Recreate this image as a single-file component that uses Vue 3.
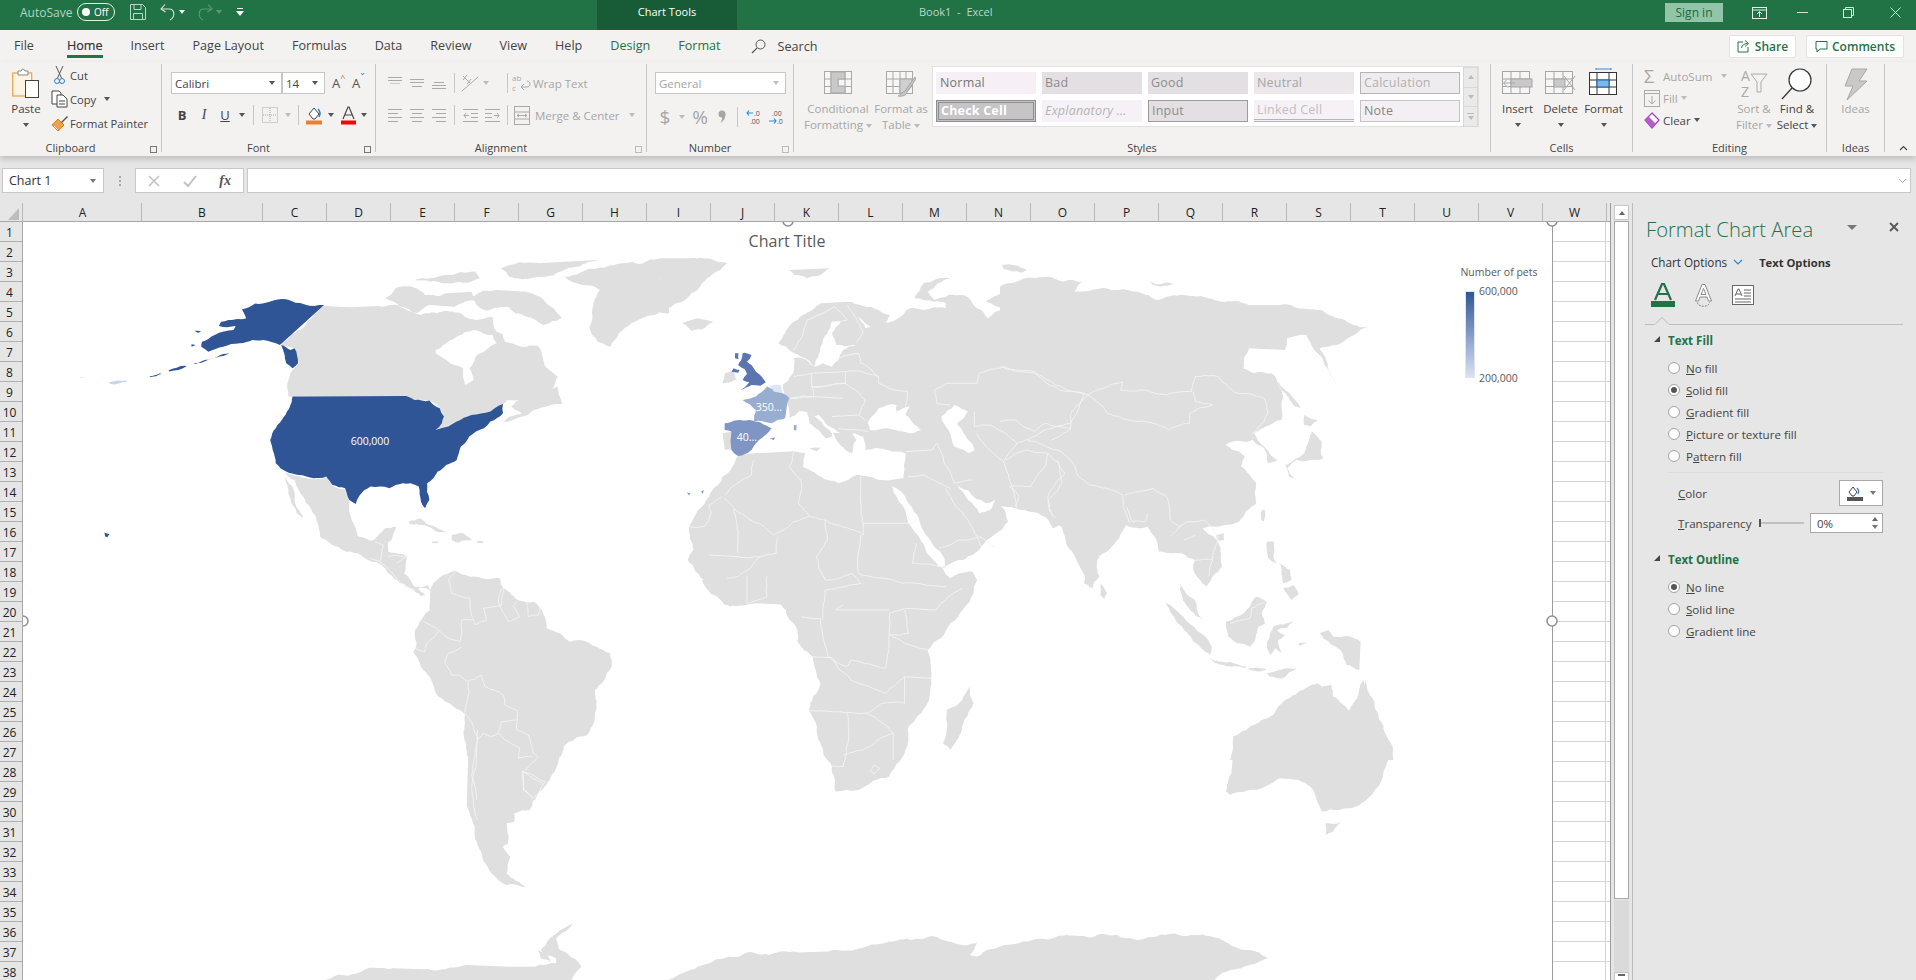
<script setup>
const colNames = 'A B C D E F G H I J K L M N O P Q R S T U V W'.split(' ')
const rows = Array.from({ length: 38 }, (_, i) => i + 1)
const tabs = [
  { t: 'File' }, { t: 'Home', on: true }, { t: 'Insert' }, { t: 'Page Layout' }, { t: 'Formulas' },
  { t: 'Data' }, { t: 'Review' }, { t: 'View' }, { t: 'Help' }, { t: 'Design', g: true }, { t: 'Format', g: true }
]
const styleCells = [
  ['Normal', 's-normal'], ['Bad', 's-bad'], ['Good', 's-good'], ['Neutral', 's-neutral'], ['Calculation', 's-calc'],
  ['Check Cell', 's-check'], ['Explanatory ...', 's-expl'], ['Input', 's-input'], ['Linked Cell', 's-link'], ['Note', 's-note']
]
const fillOpts = [
  { k: 'N', r: 'o fill' }, { k: 'S', r: 'olid fill', on: true }, { k: 'G', r: 'radient fill' },
  { k: 'P', r: 'icture or texture fill' }, { p: 'P', k: 'a', r: 'ttern fill' }
]
const lineOpts = [
  { k: 'N', r: 'o line', on: true }, { k: 'S', r: 'olid line' }, { k: 'G', r: 'radient line' }
]

/* Each frame maps traced coordinates on to the page: [x, y, scaleX, scaleY]. */
const F = {
  a: [0, 200, .4209, .3333],
  e: [660, 220, .4464, .3333],
  o: [1000, 220, .3827, .3333],
  s: [300, 580, .7653, .3333],
  m: [320, 500, .3333, .3333],
  i: [1150, 520, .3333, .3333],
  w: [0, 860, .5102, .3333]
}
const land = [
  // Canada, Arctic, Greenland
  ['a', '770,318 830,322 900,318 960,325 1000,345 1050,335 1100,345 1130,360 1170,350 1180,395 1220,400 1250,410 1275,430 1295,500 1325,530 1310,570 1280,590 1240,600 1205,600 1175,625 1165,635 1120,645 1085,665 1065,680 1035,690 1055,650 1045,625 1020,602 985,600 965,588 715,588 695,590 685,590 682,560 690,520 700,505 710,490 700,445 668,435'],
  ['a', '1195,665 1240,640 1215,620 1240,595 1285,575 1325,560 1330,590 1335,612 1290,622 1240,650'],
  ['a', '915,295 940,265 990,265 1010,285 1060,280 1120,275 1130,300 1080,320 1020,315 990,340 950,320'],
  ['a', '985,240 1060,225 1130,215 1140,235 1060,250'],
  ['a', '1120,290 1180,270 1250,275 1310,320 1335,355 1290,375 1250,350 1205,320 1150,330'],
  ['a', '1190,205 1280,190 1340,185 1420,180 1330,215 1260,235 1210,230'],
  ['a', '1340,230 1420,205 1480,190 1568,175 1590,340 1500,370 1470,400 1450,440 1420,425 1400,380 1410,310 1425,270'],
  ['e', '0,115 60,115 150,130 105,175 90,200 70,220 50,245 0,275'],
  // Mexico + Central America
  ['a', '675,818 710,828 745,838 775,832 790,858 820,868 830,905 835,960 850,1010 880,1025 920,990 940,980 930,1020 905,1040 900,1055 940,1065 965,1075 960,1120 990,1165 1010,1185 1000,1188 950,1150 900,1090 850,1060 800,1040 760,1000 750,950 720,890 700,840'],
  ['a', '675,820 695,860 715,940 720,955 705,940 685,880'],
  ['m', '0,110 60,140 100,158 120,152 150,178 185,195 230,235 265,262 290,278 300,262 325,255 332,275 300,260 280,262 262,248 240,228 232,210 262,170 225,158 205,160 205,120 230,80 195,85 165,120 125,125 100,100 95,60 0,0'],
  ['m', '265,65 300,55 345,80 385,100 350,95 310,75 270,72'],
  ['m', '395,105 430,100 455,120 415,128 395,120'],
  ['m', '335,124 355,124 352,130 337,129'],
  ['m', '470,124 490,124 490,128 472,128'],
  // South America
  ['m', '330,270 360,232 405,212 450,230 500,238 540,235 550,265 600,302 640,305 665,330 680,385 720,400 750,425 800,425 830,440 870,460 875,500 850,545 825,570 825,640 805,700 770,712 725,745 715,790 680,840 650,890 645,900 450,900 445,780 435,645 400,620 355,590 320,520 280,455 290,430 285,390 310,350 330,330'],
  ['s', '218,390 385,330 385,410 375,465 345,490 335,560 320,620 305,660 300,690 280,700 280,725 270,730 272,790 265,800 275,830 270,880 295,922 270,915 250,880 238,830 228,760 218,680 220,500'],
  // Africa
  ['e', '175,708 210,700 290,695 325,700 320,740 360,770 400,790 440,765 490,780 545,775 520,800 545,860 580,950 620,1030 650,1075 700,1055 710,1080 690,1120 660,1180 650,1200 320,1200 300,1155 220,1150 155,1160 135,1110 80,1055 62,1020 75,990 65,920 85,870 115,815 140,770'],
  ['s', '525,0 555,75 600,70 625,55 635,90 650,150 650,185 670,230 680,310 665,390 680,490 695,560 700,635 730,630 770,590 790,520 795,440 820,370 825,290 820,210 850,130 880,40 885,0'],
  ['s', '875,320 880,370 865,450 850,510 840,490 845,390 865,360'],
  // Eurasia west + centre (the east is traced separately below)
  ['e', '275,495 295,465 300,450 300,415 320,415 345,440 295,395 265,370 280,340 320,285 360,250 420,245 490,270 515,285 505,310 475,325 445,290 460,325 520,305 560,265 590,270 640,265 640,250 590,240 570,235 590,190 650,175 600,215 615,240 680,225 710,265 735,295 770,265 730,245 770,215 830,180 860,170 930,190 925,215 1000,205 1090,225 1100,800 1050,900 985,1000 970,1105 950,1090 910,905 880,925 870,900 800,865 745,850 750,835 780,905 720,980 635,1045 600,960 530,810 520,795 545,775 550,700 460,690 455,650 430,640 440,660 430,700 415,690 385,630 350,590 335,580 310,575 290,595 285,540'],
  ['e', '330,575 350,590 385,640 385,650 370,655 335,610'],
  ['e', '335,685 360,682 350,695'],
  ['e', '300,618 308,620 305,632 300,630'],
  ['e', '145,460 165,455 170,480 140,490'],
  ['e', '140,640 160,635 160,690 145,690'],
  ['e', '50,310 85,295 120,305 100,325 70,332'],
  ['e', '290,150 380,145 330,175 300,165'],
  // East Asia
  ['o', '0,200 20,190 120,170 215,185 195,215 310,210 410,240 470,225 580,245 650,255 730,255 760,255 840,270 965,320 925,345 880,375 835,385 880,495 840,410 810,365 800,345 750,355 745,390 650,385 635,445 665,460 710,460 740,530 735,600 695,620 665,640 690,680 725,720 700,730 690,685 660,660 610,665 590,675 625,695 640,710 630,740 670,790 670,850 625,905 560,920 530,925 570,965 580,1040 540,1100 505,1050 510,1020 475,1000 450,1000 415,995 385,920 330,915 285,990 255,1010 260,1070 235,1105 200,1020 170,950 160,920 130,895 105,865 40,865 0,850'],
  ['o', '815,635 840,665 845,715 810,720 775,720 750,745 770,775 755,770 745,735 795,700 805,670'],
  ['o', '795,585 830,600 810,620 795,615'],
  ['o', '715,465 760,525 785,565 770,560 735,510'],
  ['o', '685,870 692,870 690,905 682,900'],
  ['o', '565,945 585,940 585,960 570,962'],
  ['o', '262,1090 280,1120 272,1138 262,1125'],
  ['o', '5,135 70,150 55,158 10,148'],
  ['o', '390,185 455,190 440,197 400,195'],
  // South-East Asia
  ['i', '90,190 105,215 135,240 160,300 120,270 90,210'],
  ['i', '48,248 100,290 160,345 185,380 180,405 130,365 90,315'],
  ['i', '180,415 240,425 290,440 285,445 220,435 190,425'],
  ['i', '228,305 260,290 300,260 320,230 350,245 335,280 345,310 325,320 300,380 260,370 235,350'],
  ['i', '370,320 430,305 410,325 380,330 405,345 385,360 395,400 375,385 360,405 350,370 360,340'],
  ['i', '510,340 535,330 550,350 590,348 632,365 628,450 590,435 575,395 545,375 520,355'],
  ['i', '350,65 372,65 370,110 380,130 355,115 350,90'],
  ['i', '400,205 430,195 445,225 425,240 410,220'],
  ['i', '385,125 420,150 425,180 400,190 395,150'],
  ['i', '350,460 440,445 400,475 360,470'],
  ['i', '445,370 470,368 448,378'],
  ['i', '295,445 350,447 345,450 298,450'],
  // Australia
  ['i', '240,720 250,650 300,620 370,585 385,560 430,525 470,540 485,500 545,495 550,535 600,575 620,550 640,480 655,545 680,590 710,650 730,690 730,720'],
  ['s', '1210,635 1218,560 1220,470 1270,420 1300,345 1330,310 1350,350 1370,395 1392,300 1410,420 1428,510 1415,590 1380,680 1335,695 1330,670 1320,620 1305,600 1280,595 1250,630 1215,645'],
  ['s', '1340,730 1360,725 1350,755 1340,765'],
  // Antarctica
  ['w', '630,360 700,340 770,325 830,328 900,320 915,315 1000,320 1050,320 1090,310 1090,295 1060,270 1075,240 1110,200 1125,190 1090,235 1095,265 1130,300 1140,320 1125,345 1120,360'],
  ['w', '1055,270 1070,280 1080,305 1060,295'],
  ['w', '1310,360 1370,320 1420,295 1490,290 1568,280 1568,360'],
  ['s', '485,1200 520,1160 560,1130 620,1120 690,1115 740,1100 770,1085 800,1080 825,1068 840,1080 885,1090 875,1125 885,1130 920,1095 960,1078 1020,1068 1080,1075 1170,1065 1205,1080 1240,1110 1265,1135 1230,1165 1195,1200']
]
const water = [
  ['a', '1035,450 1080,415 1130,390 1170,405 1180,430 1130,470 1115,505 1125,540 1105,555 1100,505 1060,480 1035,460'],
  ['a', '1190,380 1250,400 1290,430 1240,440 1200,425'],
  ['e', '355,410 360,380 375,340 385,305 405,305 385,340 395,375 440,375 410,390 400,420 385,440 365,430 345,440'],
  ['e', '465,610 490,565 530,555 530,575 560,560 550,585 585,630 560,640 510,625 470,630'],
  ['e', '630,590 660,555 690,575 665,610 680,640 705,690 690,700 660,680 650,640'],
  ['e', '665,795 690,810 730,850 750,840 740,870 715,880 690,840'],
  ['e', '522,800 540,815 605,960 640,1040 625,1040 580,950 545,860'],
  ['e', '345,590 355,585 405,640 385,640']
]
const borders = [
  // South America
  ['m', '405,215 385,240 395,280 450,295 455,345 465,375 500,360 490,325 545,315 550,265'],
  ['m', '545,265 535,300 555,345 565,365 600,350 580,320 590,305'],
  ['m', '620,310 625,350 655,345 660,325'],
  ['m', '310,365 350,385 385,415 420,425 425,360 460,360'],
  ['m', '285,445 315,455 320,430 355,395'],
  ['m', '425,440 385,460 375,490 395,525 415,525 440,545 485,525 495,560 550,585 555,615 590,630 590,690 625,705 640,760 655,770 610,815 612,870 640,895'],
  ['m', '535,700 545,665 590,660'],
  ['m', '535,700 600,745 595,775 640,770'],
  ['m', '435,640 475,715 490,700 515,710 535,700'],
  ['m', '445,545 440,610 435,640'],
  ['m', '475,715 465,770 455,830 470,900'],
  ['m', '610,815 670,855'],
  ['m', '150,175 200,200 225,230 255,262 285,270'],
  ['m', '165,125 190,135 180,185'],
  ['m', '205,170 260,170 230,190'],
  ['s', '232,450 230,560 225,640 232,720'],
  ['s', '290,575 320,605 305,655 292,630 290,575'],
  // Africa
  ['e', '140,830 110,855 115,880 100,920 65,920'],
  ['e', '165,868 175,1000'],
  ['e', '145,835 255,945 300,905 335,888 370,900 455,945 455,910 450,770'],
  ['e', '210,720 205,765 145,825'],
  ['e', '335,888 310,850 315,780 290,740 300,695'],
  ['e', '455,910 565,910 575,900'],
  ['e', '370,900 375,960 350,1010 370,1080 430,1060 450,1090 370,1110 365,1200'],
  ['e', '450,945 445,1060 545,1090 640,1100'],
  ['e', '265,950 260,1000 225,1010 175,1070 150,1075'],
  ['e', '110,1005 175,1010 225,1010'],
  ['e', '575,970 565,1030 635,1040'],
  ['e', '195,1070 195,1150 240,1130 240,1070'],
  ['s', '655,110 680,115 685,185 690,230 715,260 720,240 765,265 770,160 770,100 790,85 830,90 865,25'],
  ['s', '710,75 700,90 770,90'],
  ['s', '790,90 795,160 770,165 820,210'],
  ['s', '670,230 695,232 720,300 765,340 790,290 825,295'],
  ['s', '790,290 790,370 760,370 740,400 665,390'],
  ['s', '715,400 710,560 695,558'],
  ['s', '740,400 775,460 735,510 710,525'],
  ['s', '775,460 775,540'],
  ['s', '750,555 758,565 750,582 745,572 750,555'],
  // Europe + central Asia
  ['e', '300,390 320,345 330,300 390,260'],
  ['e', '390,260 420,300 400,305'],
  ['e', '420,255 455,335 440,370'],
  ['e', '395,420 445,400 450,430 490,470'],
  ['e', '340,460 415,455 415,490 340,500'],
  ['e', '300,470 340,460 340,500 345,530 290,535'],
  ['e', '415,455 490,470 490,490 555,515 550,560'],
  ['e', '340,500 415,490 460,540 445,585'],
  ['e', '290,535 345,530 410,535'],
  ['e', '385,590 445,585 460,600'],
  ['e', '400,625 465,635'],
  ['e', '615,510 640,490 710,490 715,460 770,440 840,460 895,510 950,520'],
  ['e', '615,510 620,550 650,555'],
  ['e', '705,575 705,620 740,615 800,670 850,640 920,610 950,520'],
  ['e', '620,670 660,790 700,780'],
  ['e', '550,695 610,690 620,670'],
  ['e', '555,770 590,765 650,805'],
  ['e', '770,725 790,800 800,865'],
  ['e', '800,670 770,725 730,680 710,640'],
  ['e', '640,805 690,900 720,980'],
  ['e', '625,985 670,960 715,950 750,980'],
  ['e', '890,720 900,790 870,840 880,890'],
  // East Asia
  ['o', '0,440 40,450 90,455 145,495 215,520 230,525 270,505 320,485 315,510 370,510 435,525 500,515 510,470 570,470 620,520 690,535 700,580 690,605 660,640'],
  ['o', '230,525 185,580 185,625 120,610 90,635 40,600 0,605'],
  ['o', '230,525 270,560 280,580 335,600 440,630 495,610 495,580 555,555 510,545 505,515'],
  ['o', '135,660 185,625'],
  ['o', '70,660 150,690 185,720 205,770 235,795 320,825 340,910'],
  ['o', '125,700 170,760 125,830 130,875 145,895'],
  ['o', '40,860 50,830 25,800 80,800 120,735 125,700'],
  ['o', '15,720 40,700 70,690 125,700'],
  ['o', '325,825 400,805 435,830 445,900 470,920'],
  ['o', '445,950 470,920 490,905 530,900 570,950 555,1020 545,1070'],
  ['o', '480,960 510,945'],
  ['o', '510,1020 555,1020'],
  ['o', '660,640 690,625'],
  ['o', '330,860 345,905 380,905 385,880'],
  ['i', '240,310 300,295 305,265 345,245']
]
const blues = [
  ['uk', 'e', '185,400 190,398 205,405 195,425 205,435 215,455 228,470 237,487 225,497 205,495 180,510 200,487 185,480 195,462 190,448 175,435 182,420'],
  ['uk', 'e', '165,445 178,450 175,458 160,455'],
  ['uk', 'e', '168,400 176,400 176,418 168,415'],
  ['fr', 'e', '185,540 215,530 240,500 275,520 290,535 280,595 250,610 210,605 215,570'],
  ['fr', 'e', '300,615 306,615 305,632 300,630'],
  ['be', 'e', '245,497 270,495 275,520 255,515'],
  ['es', 'e', '145,610 200,600 250,625 215,670 205,690 175,708 160,690 160,635 145,630'],
  ['es', 'e', '245,655 258,652 255,660'],
  ['es', 'e', '60,818 68,820 65,826'],
  ['es', 'e', '92,815 98,810 96,822'],
  ['us', 'a', '695,590 965,588 985,600 1020,602 1045,625 1055,650 1050,670 1035,690 1065,680 1085,665 1120,645 1165,635 1175,625 1195,612 1195,640 1165,665 1150,685 1115,710 1095,740 1085,780 1060,795 1040,815 1015,850 1020,900 1010,925 1000,905 995,860 975,850 940,855 925,865 880,860 855,885 845,912 830,900 820,865 790,855 775,830 745,835 710,825 680,815 655,790 648,750 642,720 655,685 675,650'],
  ['us', 'a', '770,315 680,298 640,305 575,328 585,355 560,358 525,365 520,378 560,378 555,390 510,405 480,425 478,440 495,455 530,440 570,430 600,420 625,420 665,435'],
  ['us', 'a', '668,435 690,450 700,445 708,490 695,505 680,490 675,460'],
  ['us', 'a', '460,490 530,462 545,460 530,468 465,492'],
  ['us', 'a', '400,512 440,497 443,499 403,515'],
  ['us', 'a', '355,530 380,520 383,522 358,532'],
  ['us', 'a', '248,998 260,1002 255,1012 250,1010'],
  ['us', 'a', '455,433 465,435 455,440'],
  ['us', 'a', '462,392 478,395 470,398'],
  ['pale', 'a', '190,532 196,532 194,536'],
  ['pale', 'a', '258,548 300,542 302,546 262,552']
]

/* Traced outlines are coarse: a seeded midpoint displacement gives them a coastline's grain. */
let seed = 12345
const rnd = () => (seed = (seed * 16807) % 2147483647) / 2147483647 - 0.5
const split = (a, b, amp, out) => {
  const dx = b[0] - a[0]
  const dy = b[1] - a[1]
  if (Math.hypot(dx, dy) < 5) return
  const k = rnd() * amp
  const m = [(a[0] + b[0]) / 2 - dy * k, (a[1] + b[1]) / 2 + dx * k]
  split(a, m, amp, out)
  out.push(m)
  split(m, b, amp, out)
}
const outline = (f, s, amp, closed, keep) => {
  const [tx, ty, sx, sy] = F[f]
  const p = s.split(' ').map((q) => {
    const [x, y] = q.split(',').map(Number)
    return [tx + x * sx, ty + y * sy]
  })
  const out = []
  const n = p.length
  for (let i = 0; i < n; i++) {
    out.push(p[i])
    if (!closed && i === n - 1) break
    const a = p[i]
    const b = p[(i + 1) % n]
    const dx = Math.abs(b[0] - a[0])
    const dy = Math.abs(b[1] - a[1])
    const len = Math.hypot(dx, dy)
    const straight = len > keep || ((dx < 2 || dy < 2) && len > 25)
    if (!straight) split(a, b, amp, out)
  }
  return 'M' + out.map((q) => q[0].toFixed(1) + ',' + q[1].toFixed(1)).join(' ') + (closed ? 'Z' : '')
}
const shapes = [
  ...land.map(([f, p]) => ({ c: 'land', d: outline(f, p, .2, true, 1e4) })),
  ...water.map(([f, p]) => ({ c: 'water', d: outline(f, p, .2, true, 1e4) })),
  ...borders.map(([f, p]) => ({ c: 'bd', d: outline(f, p, .14, false, 1e4) })),
  ...blues.map(([c, f, p]) => ({ c, d: outline(f, p, .16, true, 50) }))
]
</script>

<template>
  <div class="app">
    <header class="titlebar">
      <div class="tb-left">
        <span class="autosave">AutoSave</span>
        <span class="toggle"><i></i><b>Off</b></span>
        <svg class="qs" width="18" height="18" viewBox="0 0 18 18" fill="none" stroke="#bcd6c7"><path d="M1.5 1.5h12l3 3v12h-15z"/><path d="M5 1.5v5h7v-5M4.5 16.5v-6h9v6"/></svg>
        <svg class="qs2" width="16" height="18" viewBox="0 0 16 18" fill="none" stroke="#d5e6dc" stroke-width="1.1"><path d="M5 1.5 1 6l4.5 3"/><path d="M1.5 6H9c6 0 6.500 8 1 11"/></svg>
        <span class="cr cr-w"></span>
        <svg class="qs3" width="16" height="18" viewBox="0 0 16 18" fill="none" stroke="#5d9a7b" stroke-width="1.1"><path d="M11 1.500 15 6l-4.500 3"/><path d="M14.500 6H7c-6 0-6.500 8-1 11"/></svg>
        <span class="cr cr-d"></span>
        <svg class="qs4" width="8" height="10" viewBox="0 0 8 10" fill="#fff"><rect x="1" y="1" width="6" height="1"/><path d="M0 4h8L4 9z"/></svg>
      </div>
      <div class="ctab">Chart Tools</div>
      <div class="doc">Book1&nbsp; -&nbsp; Excel</div>
      <div class="tb-right">
        <span class="signin">Sign in</span>
        <svg class="wi1" width="15" height="12" viewBox="0 0 15 12" fill="none" stroke="#e4f0e9"><rect x=".5" y=".5" width="14" height="11"/><path d="M.5 3h14M7.500 10V5M5 7l2.500-2.500L10 7"/></svg>
        <svg class="wi2" width="11" height="2" viewBox="0 0 11 2"><rect width="11" height="1" fill="#cfe3d7"/></svg>
        <svg class="wi3" width="11" height="11" viewBox="0 0 11 11" fill="none" stroke="#d9e9e0"><path d="M2.500 2.500v-2h8v8h-2"/><rect x=".5" y="2.500" width="8" height="8"/></svg>
        <svg class="wi4" width="11" height="11" viewBox="0 0 11 11" stroke="#cfe3d7"><path d="M.5.5l10 10M10.500.5l-10 10"/></svg>
      </div>
    </header>

    <nav class="tabs">
      <span v-for="x in tabs" :key="x.t" class="tab" :class="{ on: x.on, grn: x.g }">{{ x.t }}</span>
      <span class="search">
        <svg width="15" height="15" viewBox="0 0 15 15" fill="none" stroke="#555"><circle cx="9.500" cy="5.500" r="4.500"/><path d="M6.200 8.800 1 14" stroke-width="1.200"/></svg>
        <span>Search</span>
      </span>
      <span class="tabs-right">
        <span class="cbtn cshare">
          <svg width="14" height="14" viewBox="0 0 14 14" fill="none" stroke="#217346"><path d="M6 3H1v10h10V8"/><path d="M4.500 9c.5-3 3-4.500 6-4.500M8 1.500l3.500 3-3.500 3"/></svg>
          <span>Share</span>
        </span>
        <span class="cbtn ccomm">
          <svg width="13" height="13" viewBox="0 0 13 13" fill="none" stroke="#217346"><path d="M1 1.500h11v7.500H5l-3 3V9H1z"/></svg>
          <span>Comments</span>
        </span>
      </span>
    </nav>

    <section class="ribbon">
      <!-- Clipboard -->
      <div class="grp g-clip">
        <div class="gbody">
          <div class="lbtn paste">
            <svg width="28" height="33" viewBox="0 0 28 33" fill="none"><rect x=".7" y="5" width="19" height="23" fill="#fdf3e3" stroke="#eca24c" stroke-width="1.200"/><path d="M6 5V3h3l1.500-2h1L13 3h3v4H6z" fill="#fff" stroke="#8a8a8a"/><rect x="13.500" y="12.500" width="13" height="17" fill="#fff" stroke="#444"/></svg>
            <span>Paste</span>
            <i class="caret dk cm"></i>
          </div>
          <div class="scol">
            <div class="srow"><span class="sic"><svg width="11" height="20" viewBox="0 0 11 20" fill="none" stroke="#555"><path d="M2 1 7.500 13M9 1 3.500 13"/><circle cx="3" cy="16" r="2.500" stroke="#2a7fc9"/><circle cx="8" cy="16" r="2.500" stroke="#2a7fc9"/></svg></span>Cut</div>
            <div class="srow"><span class="sic"><svg width="18" height="18" viewBox="0 0 18 18" fill="#fff" stroke="#444"><path d="M1 1h7l2 2v11H1z"/><path d="M6 5h6l4 4v8H6z"/><path d="M8 11h6M8 14h6"/></svg></span>Copy<i class="caret dk copyc"></i></div>
            <div class="srow"><span class="sic"><svg width="18" height="18" viewBox="0 0 18 18"><path d="M1 11 7 5l6 6-6 6z" fill="#f0a04b" stroke="#d9801f"/><path d="M10 8l6-6 1 1-6 6z" fill="#555"/><path d="M3 12l4 4" stroke="#fff"/></svg></span>Format Painter</div>
          </div>
        </div>
        <div class="glabel shift">Clipboard<i class="launch"></i></div>
      </div>

      <!-- Font -->
      <div class="grp g-font">
        <div class="gbody col">
          <div class="f1">
            <span class="combo">Calibri<i class="caret dk"></i></span>
            <span class="combo">14<i class="caret dk"></i></span>
            <span class="aup">A<sup>^</sup></span>
            <span class="aup">A<sup class="bl">ˇ</sup></span>
          </div>
          <div class="f2">
            <b class="fb">B</b><i class="fi">I</i><u class="fu">U</u><i class="caret dk"></i><i class="vsep"></i>
            <svg width="16" height="16" viewBox="0 0 16 16" fill="none" stroke="#aaa" stroke-dasharray="1 1"><rect x=".5" y=".5" width="15" height="15"/><path d="M8 1v14M1 8h14"/></svg>
            <i class="caret lt"></i><i class="vsep"></i>
            <svg width="17" height="19" viewBox="0 0 17 19"><path d="M3 8 8 2l5 6-4 5H7z" fill="#fff" stroke="#444"/><path d="M12 3c3 3 2 6 1 8" stroke="#2a7fc9" fill="none" stroke-width="1.500"/><rect y="14.500" width="16" height="4" fill="#ed7d31"/></svg>
            <i class="caret dk"></i>
            <svg width="17" height="19" viewBox="0 0 17 19"><rect x="1" y="14.500" width="15" height="4" fill="#f00"/><path d="M3 13 8 1h1l5 12M5 9h7" fill="none" stroke="#444" stroke-width="1.200"/></svg>
            <i class="caret dk"></i>
          </div>
        </div>
        <div class="glabel shift">Font<i class="launch"></i></div>
      </div>

      <!-- Alignment -->
      <div class="grp g-align">
        <div class="gbody col">
          <div class="a1">
            <svg width="14" height="14" viewBox="0 0 14 14" stroke="#aaa"><path d="M0 1.500h14M0 4.500h14"/><path d="M2 7.500h10" stroke="#ccc"/></svg>
            <svg width="14" height="14" viewBox="0 0 14 14" stroke="#aaa"><path d="M0 3.500h14M0 6.500h14M2 10.500h10"/></svg>
            <svg width="14" height="14" viewBox="0 0 14 14" stroke="#aaa"><path d="M2 6.500h10M0 9.500h14M0 12.500h14"/></svg>
            <i class="vsep"></i>
            <svg width="18" height="18" viewBox="0 0 18 18" fill="none" stroke="#aaa"><path d="M1 17 17 3M2 2l8 8M6 1 2 6M10 5 6 10"/></svg>
            <i class="caret lt"></i><span></span><i class="vsep"></i>
            <svg width="20" height="20" viewBox="0 0 20 20" fill="none" stroke="#aaa"><text x="0" y="8" class="wt">ab</text><text x="0" y="18" class="wt">c</text><path d="M9 14h6c4 0 4-6 0-6M12 11l-3 3 3 3"/></svg>
            <span class="dis wrap">Wrap Text</span>
          </div>
          <div class="a2">
            <svg width="14" height="14" viewBox="0 0 14 14" stroke="#aaa"><path d="M0 1.500h14M0 5.500h10M0 9.500h14M0 13.500h10"/></svg>
            <svg width="14" height="14" viewBox="0 0 14 14" stroke="#aaa"><path d="M0 1.500h14M2 5.500h10M0 9.500h14M2 13.500h10"/></svg>
            <svg width="14" height="14" viewBox="0 0 14 14" stroke="#aaa"><path d="M0 1.500h14M4 5.500h10M0 9.500h14M4 13.500h10"/></svg>
            <i class="vsep"></i>
            <svg width="15" height="14" viewBox="0 0 15 14" fill="none" stroke="#aaa"><path d="M0 1.500h15M8 5.500h7M8 9.500h7M0 13.500h15M6 7.500H1M3 5 1 7.500 3 10" /></svg>
            <svg width="15" height="14" viewBox="0 0 15 14" fill="none" stroke="#aaa"><path d="M0 1.500h15M0 5.500h7M0 9.500h7M0 13.500h15M9 7.500h5M12 5l2 2.500L12 10"/></svg>
            <i class="vsep"></i>
            <svg width="16" height="19" viewBox="0 0 16 19" fill="none" stroke="#aaa"><rect x=".5" y=".5" width="15" height="18"/><path d="M.5 6h15M.5 13h15M3 9.500h10M5 8 3 9.500 5 11M11 8l2 1.500L11 11"/></svg>
            <span class="dis merge">Merge &amp; Center<i class="caret lt"></i></span>
          </div>
        </div>
        <div class="glabel shift">Alignment<i class="launch lite"></i></div>
      </div>

      <!-- Number -->
      <div class="grp g-num">
        <div class="gbody col">
          <div class="n1"><span class="combo dis">General<i class="caret lt"></i></span></div>
          <div class="n2">
            <span class="dis dollar">$</span><i class="caret lt"></i>
            <span class="dis pct">%</span>
            <svg width="8" height="14" viewBox="0 0 8 14"><circle cx="4" cy="4" r="3.500" fill="#a6a6a6"/><path d="M7.500 4c0 4-1.500 7-5 9 1-2 2-4 1.500-6z" fill="#a6a6a6"/></svg>
            <i class="vsep"></i>
            <svg width="16" height="18" viewBox="0 0 16 18"><path d="M7 5H1M3 2.500 1 5l2 2.500" fill="none" stroke="#2a8fdc" stroke-width="1.200"/><text x="8" y="8" class="mini">.0</text><text x="4" y="16" class="mini">.00</text></svg>
            <svg width="16" height="18" viewBox="0 0 16 18"><text x="4" y="8" class="mini">.00</text><path d="M1 13h7M6 10.500 8 13l-2 2.500" fill="none" stroke="#2a8fdc" stroke-width="1.200"/><text x="9" y="16" class="mini">.0</text></svg>
          </div>
        </div>
        <div class="glabel shift">Number<i class="launch lite"></i></div>
      </div>

      <!-- Styles -->
      <div class="grp g-styles">
        <div class="gbody">
          <div class="lbtn w-cf dis">
            <svg width="28" height="33" viewBox="0 0 28 33" fill="none" stroke="#a8a8a8"><rect x=".5" y="3.500" width="27" height="22" fill="#f6f6f6"/><path d="M.5 11h27M.5 18.500h27M7 3.500v22M14 3.500v22M21 3.500v22"/><path d="M7 4h14v7h-7v7h7v7H7z" fill="#c9c9c9"/></svg>
            <span>Conditional</span>
            <span>Formatting<i class="caret lt in"></i></span>
          </div>
          <div class="lbtn w-ft dis">
            <svg width="30" height="33" viewBox="0 0 30 33" fill="none" stroke="#a8a8a8"><rect x=".5" y="3.500" width="26" height="22" fill="#f6f6f6"/><path d="M.5 11h26M.5 18.500h26M7 3.500v22M14 3.500v22M20 3.500v22"/><path d="M14 11h12v7l-6 7h-6z" fill="#d0d0d0"/><path d="M29 9 19 23c-3 1-4 4-7 5 4 1 9-1 9-4L30 11z" fill="#c5c5c5"/></svg>
            <span>Format as</span>
            <span>Table<i class="caret lt in"></i></span>
          </div>
          <div class="gallery">
            <div class="gcells">
              <span v-for="s in styleCells" :key="s[0]" class="sc" :class="s[1]">{{ s[0] }}</span>
            </div>
            <div class="gscroll">
              <span><i class="cu"></i></span>
              <span><i class="caret lt"></i></span>
              <span class="gs3"><i class="bar"></i><i class="caret lt"></i></span>
            </div>
          </div>
        </div>
        <div class="glabel">Styles</div>
      </div>

      <!-- Cells -->
      <div class="grp g-cells">
        <div class="gbody">
          <div class="lbtn w-c">
            <svg width="31" height="33" viewBox="0 0 31 33" fill="none" stroke="#a5a5a5"><rect x=".5" y="3.500" width="27" height="22" fill="#f6f6f6"/><path d="M.5 11h27M.5 18.500h27M9 3.500v22M18 3.500v22"/><rect x="9" y="11" width="21" height="8" fill="#c9c9c9"/><path d="M13 15H2M6 10.500 1.500 15 6 19.500" stroke="#a5a5a5" fill="#f6f6f6"/></svg>
            <span>Insert</span><i class="caret dk cm"></i>
          </div>
          <div class="lbtn w-c">
            <svg width="31" height="33" viewBox="0 0 31 33" fill="none" stroke="#a5a5a5"><rect x=".5" y="3.500" width="27" height="22" fill="#f6f6f6"/><path d="M.5 11h27M.5 18.500h27M9 3.500v22M18 3.500v22"/><rect x="9" y="11" width="11" height="8" fill="#c9c9c9"/><path d="M19 8l11 14M30 8 19 22"/></svg>
            <span>Delete</span><i class="caret dk cm"></i>
          </div>
          <div class="lbtn w-c">
            <svg width="29" height="33" viewBox="0 0 29 33" fill="none" stroke="#333"><path d="M7 1h15M7 0v2M22 0v2" stroke="#2a8fdc"/><rect x=".5" y="4.500" width="27" height="22" fill="#fff"/><path d="M.5 12h27M.5 19h27M8 4.500v22M20 4.500v22"/><rect x="8" y="12" width="12" height="7" fill="#7ab8ea" stroke="#1f5fa8"/></svg>
            <span>Format</span><i class="caret dk cm"></i>
          </div>
        </div>
        <div class="glabel">Cells</div>
      </div>

      <!-- Editing -->
      <div class="grp g-edit">
        <div class="gbody">
          <div class="scol e-col">
            <div class="erow dis"><span class="sigma">Σ</span>AutoSum<i class="caret lt sumc"></i></div>
            <div class="erow dis"><svg class="eic" width="16" height="17" viewBox="0 0 16 17" fill="none" stroke="#aaa"><rect x=".5" y=".5" width="15" height="16"/><path d="M.5 3.500h15M8 6v8M4.500 10.500 8 14l3.500-3.500" /></svg>Fill<i class="caret lt ml3"></i></div>
            <div class="erow dark"><svg class="eic" width="16" height="17" viewBox="0 0 16 17"><path d="M8 1l7 7-7 8-7-8z" fill="#fff" stroke="#9b3fb4" stroke-width="1.200"/><path d="M1 8h0l3.500-3.500 7 7L8 16z" fill="#b65ccf"/></svg>Clear<i class="caret dk ml3"></i></div>
          </div>
          <div class="lbtn w-sort dis">
            <svg width="30" height="33" viewBox="0 0 30 33" fill="none" stroke="#aaa"><text x="2" y="13" class="az">A</text><text x="2" y="29" class="az">Z</text><path d="M12 6h16l-6 8v10h-4V14z" fill="#f3f2f1"/></svg>
            <span>Sort &amp;</span>
            <span>Filter<i class="caret lt in"></i></span>
          </div>
          <div class="lbtn w-find">
            <svg width="32" height="33" viewBox="0 0 32 33" fill="none" stroke="#333" stroke-width="1.200"><circle cx="19" cy="12" r="11" fill="#fff"/><path d="M11 20 1 31"/></svg>
            <span>Find &amp;</span>
            <span>Select<i class="caret dk in"></i></span>
          </div>
        </div>
        <div class="glabel">Editing</div>
      </div>

      <!-- Ideas -->
      <div class="grp g-ideas">
        <div class="gbody">
          <div class="lbtn w-id dis">
            <svg width="24" height="33" viewBox="0 0 24 33"><path d="M8 1h15l-8 12h8L3 32l6-14H1z" fill="#c9c9c9" stroke="#a8a8a8"/></svg>
            <span>Ideas</span>
          </div>
        </div>
        <div class="glabel">Ideas</div>
      </div>
      <svg class="collapse" width="9" height="6" viewBox="0 0 9 6" fill="none" stroke="#444" stroke-width="1.200"><path d="M1 5l3.500-3.500L8 5"/></svg>
    </section>

    <div class="fbar">
      <div class="namebox">Chart 1<i class="caret md"></i></div>
      <div class="dots"><i></i><i></i><i></i></div>
      <div class="fxbox">
        <svg width="12" height="12" viewBox="0 0 12 12" stroke="#c2c2c2" stroke-width="1.500"><path d="M1 1l10 10M11 1 1 11"/></svg>
        <svg width="14" height="12" viewBox="0 0 14 12" fill="none" stroke="#c2c2c2" stroke-width="2"><path d="M1 7l4 4 8-10"/></svg>
        <span class="fx">fx</span>
      </div>
      <div class="finput"><svg width="9" height="6" viewBox="0 0 9 6" fill="none" stroke="#b5b5b5"><path d="M1 1l3.500 3.500L8 1"/></svg></div>
    </div>

    <main class="main">
      <div class="sheet">
        <div class="colhead">
          <div class="corner"><i></i></div>
          <div v-for="c in colNames" :key="c" class="ch">{{ c }}</div>
        </div>
        <div class="sbody">
          <div class="rowhead">
            <div v-for="r in rows" :key="r" class="rh">{{ r }}</div>
          </div>
          <div class="cells">
            <div class="chart">
              <svg class="map" width="1540" height="758" viewBox="23 222 1540 758">
                <path v-for="(s, i) in shapes" :key="i" :class="s.c" :d="s.d" />
                <defs>
                  <linearGradient id="lg" x1="0" y1="0" x2="0" y2="1">
                    <stop offset="0" stop-color="#2f5597" />
                    <stop offset="1" stop-color="#d9e3f4" />
                  </linearGradient>
                </defs>
                <text x="787" y="247" text-anchor="middle" class="ct">Chart Title</text>
                <text x="1499" y="276" text-anchor="middle" class="lg">Number of pets</text>
                <rect x="1465.500" y="291.500" width="9" height="86" fill="url(#lg)" stroke="#dde6f5" />
                <text x="1479" y="295" class="lg">600,000</text>
                <text x="1479" y="382" class="lg">200,000</text>
                <text x="370" y="445" text-anchor="middle" class="dl">600,000</text>
                <text x="769" y="411" text-anchor="middle" class="dl">350...</text>
                <text x="747" y="441" text-anchor="middle" class="dl">40...</text>
                <circle cx="788" cy="221" r="5" class="hd" />
                <circle cx="1552" cy="221" r="5" class="hd" />
                <circle cx="1552" cy="621" r="5" class="hd" />
                <circle cx="23" cy="621" r="5" class="hd" />
              </svg>
            </div>
          </div>
        </div>
      </div>

      <div class="vscroll">
        <span class="sb-btn"><i class="cu dk2"></i></span>
        <span class="thumb"></span>
        <span class="sb-btn end"><i class="bar2"></i></span>
      </div>

      <aside class="pane">
        <div class="p-head">
          <span class="p-title">Format Chart Area</span>
          <i class="caret p-c"></i>
          <svg class="p-x" width="10" height="10" viewBox="0 0 10 10" stroke="#555" stroke-width="1.800"><path d="M1 1l8 8M9 1 1 9"/></svg>
        </div>
        <div class="p-opts">
          <span>Chart Options</span>
          <svg width="10" height="6" viewBox="0 0 10 6" fill="none" stroke="#2b88d8" stroke-width="1.200"><path d="M1 1l4 4 4-4"/></svg>
          <b>Text Options</b>
        </div>
        <div class="p-icons">
          <svg width="24" height="24" viewBox="0 0 24 24"><path d="M4 17 11 1h2l7 16M7 11h10" fill="none" stroke="#217346" stroke-width="2.200"/><rect y="18" width="24" height="6" fill="#217346"/></svg>
          <svg width="17" height="23" viewBox="0 0 17 23" fill="#fff" stroke="#8a8a8a"><path d="M7 .5h3L16.500 17h-3L12 13H5l-1.500 4h-3z"/><path d="M6 10.500l2.500-6 2.500 6z"/><path d="M2.500 18.500c0 5 12 5 12 0" fill="none" stroke-dasharray="2 1"/></svg>
          <svg width="22" height="20" viewBox="0 0 22 20" fill="#fff" stroke="#666"><rect x=".5" y=".5" width="21" height="19"/><path d="M3 11l3-7h1l3 7M4 9h5M12 5h7M12 8h7M12 11h7M3 14h16M3 17h16" fill="none"/></svg>
        </div>
        <svg class="p-line" width="258" height="11" viewBox="0 0 258 11" fill="none" stroke="#bdbdbd"><path d="M0 10.500h10l7-7 7 7h234"/></svg>

        <div class="p-sec s1"><i class="tri"></i>Text Fill</div>
        <div class="p-radios">
          <label v-for="o in fillOpts" :key="o.k + o.r" class="p-r">
            <i class="radio" :class="{ on: o.on }"></i><span>{{ o.p }}<u>{{ o.k }}</u>{{ o.r }}</span>
          </label>
        </div>
        <div class="p-div"></div>
        <div class="p-row color">
          <span><u>C</u>olor</span>
          <span class="colbtn">
            <svg width="17" height="15" viewBox="0 0 17 15"><path d="M2 6 6 1l4 5-3 4H5z" fill="#fff" stroke="#444"/><path d="M10 2c2 2 2 4 1 6" fill="none" stroke="#2a7fc9" stroke-width="1.200"/><rect y="11" width="16" height="4" fill="#555"/></svg>
            <i class="caret md"></i>
          </span>
        </div>
        <div class="p-row transp">
          <span class="tl"><u>T</u>ransparency</span>
          <svg width="46" height="8" viewBox="0 0 46 8"><rect x="1" width="2" height="8" fill="#555"/><rect x="3" y="3.500" width="43" height="1" fill="#999"/></svg>
          <span class="spin">0%<span class="spb"><i class="cu dk2"></i><i class="caret md"></i></span></span>
        </div>
        <div class="p-sec s2"><i class="tri"></i>Text Outline</div>
        <div class="p-radios">
          <label v-for="o in lineOpts" :key="o.k" class="p-r">
            <i class="radio" :class="{ on: o.on }"></i><span><u>{{ o.k }}</u>{{ o.r }}</span>
          </label>
        </div>
      </aside>
    </main>
  </div>
</template>

<style>
html, body { margin: 0; padding: 0; background: #e6e6e6; overflow: hidden; }
</style>

<style scoped>
.app { width: 1916px; height: 980px; display: flex; flex-direction: column; overflow: hidden; font-family: "Open Sans", "Noto Sans", sans-serif; font-size: 12px; color: #444; background: #e6e6e6; }
svg { flex: none; display: block; }
i { display: block; font-style: normal; }

/* title bar */
.titlebar { height: 30px; flex: none; background: #217346; display: flex; color: #fff; position: relative; }
.tb-left { width: 597px; display: flex; align-items: center; padding: 0 0 6px 20px; box-sizing: border-box; }
.autosave { color: #b5d2c2; width: 57px; }
.toggle { width: 38px; height: 18px; border: 1px solid #e6f0ea; border-radius: 10px; display: flex; align-items: center; box-sizing: border-box; padding-left: 4px; gap: 4px; }
.toggle i { width: 8px; height: 8px; border-radius: 50%; background: #fff; }
.toggle b { font-size: 10px; font-weight: 400; }
.qs { margin-left: 14px; }
.qs2 { margin-left: 13px; }
.qs3 { margin-left: 12px; }
.qs4 { margin-left: 14px; }
.cr { width: 0; height: 0; border-left: 3px solid transparent; border-right: 3px solid transparent; margin-left: 3px; }
.cr-w { border-top: 4px solid #e8f1ec; }
.cr-d { border-top: 4px solid #5d9a7b; }
.ctab { width: 140px; background: #185c37; text-align: center; line-height: 24px; font-size: 11px; }
.doc { width: 928px; box-sizing: border-box; padding-left: 182px; line-height: 24px; color: #bcd6c7; font-size: 11px; }
.tb-right { flex: 1; display: flex; align-items: center; padding-bottom: 5px; }
.signin { width: 58px; height: 19px; background: #92c5a8; color: #1b6a40; text-align: center; line-height: 19px; font-size: 12px; }
.wi1 { margin-left: 29px; }
.wi2 { margin-left: 30px; }
.wi3 { margin-left: 35px; }
.wi4 { margin-left: 36px; }

/* tabs */
.tabs { height: 32px; flex: none; background: #f3f2f1; display: flex; align-items: center; padding-left: 14px; gap: 28px; font-size: 12.600px; color: #444; position: relative; }
.tab { line-height: 32px; height: 32px; position: relative; }
.tab:first-child { margin-right: 5px; }
.tab.on { color: #333; -webkit-text-stroke: .2px #333; }
.tab.on::after { content: ""; position: absolute; left: 0; right: 0; bottom: 4px; height: 3px; background: #217346; }
.tab.grn { color: #217346; }
.search { display: flex; align-items: center; gap: 12px; margin-left: 2px; }
.tabs-right { margin-left: auto; display: flex; gap: 10px; padding-right: 12px; }
.cbtn { height: 23px; box-sizing: border-box; display: flex; align-items: center; justify-content: center; gap: 4px; background: #fff; border: 1px solid #e4e2e0; color: #217346; font-weight: 600; font-size: 12px; border-radius: 2px; }
.cshare { width: 67px; }
.ccomm { width: 98px; }

/* ribbon */
.ribbon { height: 94px; flex: none; background: #f3f2f1; display: flex; position: relative; z-index: 2; box-shadow: 0 3px 6px rgba(0, 0, 0, .18); }
.grp { height: 88px; margin-top: 2px; box-sizing: border-box; border-right: 1px solid #c6c6c6; display: flex; flex-direction: column; }
.gbody { height: 76px; display: flex; }
.gbody.col { flex-direction: column; }
.glabel { height: 12px; line-height: 16px; text-align: center; font-size: 11px; color: #444; position: relative; }
.glabel.shift { padding-right: 20px; }
.launch { position: absolute; right: 4px; top: 6px; width: 6px; height: 6px; border-left: 1px solid #777; border-top: 1px solid #777; box-shadow: inset -2px -2px 0 -1px #777; }
.launch.lite { border-color: #bbb; box-shadow: inset -2px -2px 0 -1px #bbb; }
.g-clip { width: 162px; }
.g-clip .scol { margin-top: -1px; }
.g-font { width: 214px; }
.g-align { width: 271px; }
.g-num { width: 147px; }
.g-styles { width: 697px; }
.g-cells { width: 142px; }
.g-edit { width: 194px; }
.g-ideas { width: 58px; }
.collapse { position: absolute; left: 1899px; top: 83px; }
.caret { width: 0; height: 0; border-left: 3px solid transparent; border-right: 3px solid transparent; }
.caret.dk { border-top: 4px solid #555; }
.caret.lt { border-top: 4px solid #bbb; }
.caret.md { border-top: 4px solid #777; }
.caret.in { display: inline-block; margin-left: 3px; vertical-align: middle; }
.cm { margin-top: 6px; }
.dis { color: #a6a6a6; }
.lbtn { display: flex; flex-direction: column; align-items: center; padding-top: 4px; line-height: 16px; font-size: 11.500px; white-space: nowrap; box-sizing: border-box; }
.paste { width: 30px; margin-left: 11px; }
.scol { display: flex; flex-direction: column; }
.srow { height: 24px; display: flex; align-items: center; margin-left: 8px; font-size: 11.200px; color: #444; white-space: nowrap; }
.sic { width: 21px; display: flex; justify-content: center; }
.copyc { margin-left: 8px; }
.f1 { margin: 8px 0 0 9px; height: 22px; display: grid; grid-template-columns: 111px 43px 20px 21px; align-items: center; }
.combo { height: 22px; box-sizing: border-box; border: 1px solid #c8c6c4; background: #fff; display: flex; align-items: center; justify-content: space-between; padding: 0 6px 0 3px; font-size: 11.500px; }
.combo + .combo { border-left: 1px solid #c8c6c4; margin-left: 0; }
.aup { margin-left: 7px; font-size: 13px; color: #555; display: flex; }
.aup sup { font-size: 9px; line-height: 8px; color: #b9762f; }
.aup sup.bl { color: #2a8fdc; font-size: 11px; }
.f2 { margin: 10px 0 0 9px; height: 22px; display: grid; grid-template-columns: 22px 22px 20px 13px 10px 24px 11px 10px 22px 11px 24px 8px; align-items: center; justify-items: center; }
.fb, .fi, .fu { font-size: 13px; color: #444; }
.fb { font-weight: 700; }
.fi { font-family: "Liberation Serif", serif; font-style: italic; font-size: 14px; }
.vsep { width: 1px; height: 20px; background: #c8c6c4; }
.a1, .a2 { margin-left: 8px; display: grid; align-items: center; justify-items: center; height: 24px; }
.a1 { margin-top: 7px; grid-template-columns: 22px 22px 22px 8px 24px 8px 13px 8px 22px 60px; }
.a2 { margin-top: 8px; grid-template-columns: 22px 22px 22px 8px 24px 21px 8px 22px 110px; }
.wrap { font-size: 11.500px; justify-self: start; white-space: nowrap; }
.wt { font-size: 8px; fill: #aaa; stroke: none; font-family: "Open Sans", sans-serif; }
.merge { font-size: 11.500px; justify-self: start; white-space: nowrap; display: flex; align-items: center; gap: 9px; margin-left: 2px; }
.n1 { margin: 8px 0 0 8px; width: 131px; display: grid; }
.n2 { margin: 10px 0 0 8px; height: 22px; display: grid; grid-template-columns: 20px 14px 22px 22px 8px 25px 20px; align-items: center; justify-items: center; }
.dollar { font-size: 19px; }
.pct { font-size: 19px; }
.mini { font-size: 7px; fill: #555; font-family: "Open Sans", sans-serif; }
.w-cf { width: 76px; margin-left: 6px; }
.w-ft { width: 50px; }
.gallery { margin: 2px 0 0 6px; width: 547px; height: 61px; box-sizing: border-box; border: 1px solid #e1e0df; background: #fff; display: flex; }
.gcells { width: 530px; padding: 5px 0 0 3px; box-sizing: border-box; display: grid; grid-template-columns: repeat(5, 100px); grid-template-rows: 22px 22px; gap: 6px; }
.sc { height: 22px; box-sizing: border-box; padding: 0 3px; line-height: 22px; font-size: 12.500px; letter-spacing: .2px; white-space: nowrap; }
.s-normal { background: #f6f0f6; color: #757575; padding-left: 4px; }
.s-bad { background: #e3dfe3; color: #8d8d8d; }
.s-good { background: #e3dfe3; color: #8d8d8d; }
.s-neutral { background: #ebe7eb; color: #a5a5a5; }
.s-calc { background: #efecef; color: #b0b0b0; border: 1px solid #b5b5b5; line-height: 20px; }
.s-check { background: #c6c4c6; color: #fff; font-weight: 700; border: 3px double #8e8e8e; line-height: 16px; padding: 0 2px; }
.s-expl { background: #f6f1f6; color: #b4b4b4; font-style: italic; }
.s-input { background: #e3dfe3; color: #8d8d8d; border: 1px solid #9c9c9c; line-height: 20px; }
.s-link { background: #f6f1f6; color: #c0c0c0; border-bottom: 3px double #b5b5b5; line-height: 19px; }
.s-note { background: #f3eff3; color: #868686; border: 1px solid #c5c5c5; line-height: 20px; }
.gscroll { width: 15px; margin-left: auto; display: flex; flex-direction: column; background: #eaeaea; }
.gscroll span { flex: 1; border: 1px solid #d8d8d8; margin-bottom: -1px; display: flex; flex-direction: column; align-items: center; justify-content: center; gap: 2px; }
.cu { width: 0; height: 0; border-left: 3px solid transparent; border-right: 3px solid transparent; border-bottom: 4px solid #bbb; }
.bar { width: 7px; height: 1px; background: #bbb; }
.w-c { width: 43px; }
.g-cells .gbody { padding-left: 5px; }
.e-col { width: 102px; padding-left: 11px; box-sizing: border-box; }
.erow { height: 22px; display: flex; align-items: center; font-size: 11.500px; white-space: nowrap; }
.erow.dark { color: #444; }
.sigma { font-size: 18px; width: 19px; }
.eic { margin-right: 3px; }
.ml3 { margin-left: 3px; }
.sumc { margin-left: 9px; }
.e-col .erow:first-child { margin-top: 1px; }
.w-sort { width: 38px; margin-left: 0; }
.w-find { width: 48px; }
.w-id { width: 58px; }
.az { font-size: 14px; fill: #aaa; stroke: none; font-family: "Open Sans", sans-serif; }

/* formula bar */
.fbar { height: 47px; flex: none; box-sizing: border-box; padding: 12px 5px 10px 2px; display: flex; }
.namebox { width: 102px; background: #fff; border: 1px solid #c8c8c8; box-sizing: border-box; display: flex; align-items: center; justify-content: space-between; padding: 0 7px 0 6px; font-size: 12.500px; color: #333; }
.dots { width: 31px; display: flex; flex-direction: column; align-items: center; justify-content: center; gap: 2px; }
.dots i { width: 2px; height: 2px; background: #a6a6a6; }
.fxbox { width: 109px; background: #fff; border: 1px solid #c8c8c8; box-sizing: border-box; display: flex; align-items: center; justify-content: space-between; padding: 0 12px; }
.fx { font-family: "Liberation Serif", serif; font-style: italic; font-weight: 700; color: #555; font-size: 14px; }
.finput { flex: 1; margin-left: 3px; background: #fff; border: 1px solid #c8c8c8; box-sizing: border-box; display: flex; align-items: center; justify-content: flex-end; padding-right: 3px; }

/* sheet */
.main { flex: 1; display: flex; min-height: 0; }
.sheet { width: 1611px; flex: none; display: flex; flex-direction: column; overflow: hidden; border-right: 1px solid #9c9c9c; box-sizing: border-box; }
.colhead { height: 19px; flex: none; display: grid; grid-template-columns: 24px 118px 121px repeat(21, 64px) 1fr; position: relative; z-index: 3; background: #e6e6e6; border-bottom: 1px solid #a8a8a8; box-sizing: border-box; }
.corner { position: relative; border-right: 1px solid #b8b8b8; margin-right: 1px; }
.corner i { position: absolute; left: 8px; top: 5px; width: 0; height: 0; border-left: 11px solid transparent; border-bottom: 12px solid #bdbdbd; }
.ch { text-align: center; line-height: 19px; font-size: 12px; color: #222; border-right: 1px solid #b8b8b8; }
.sbody { flex: 1; display: flex; min-height: 0; }
.rowhead { width: 23px; flex: none; background: #e6e6e6; box-sizing: border-box; border-right: 1px solid #a8a8a8; }
.rh { height: 20px; box-sizing: border-box; border-bottom: 1px solid #b0b0b0; line-height: 21px; text-align: center; font-size: 12px; color: #222; padding-right: 3px; }
.cells { flex: 1; position: relative; background: #fff repeating-linear-gradient(to bottom, #fff 0, #fff 19px, #d4d4d4 19px, #d4d4d4 20px); }
.cells::after { content: ""; position: absolute; left: 1582px; top: 0; bottom: 0; width: 1px; background: #d4d4d4; }
.chart { position: absolute; left: 0; top: 0; width: 1529px; height: 758px; background: #fff; border-right: 1px solid #9c9c9c; z-index: 1; }
.map { position: absolute; left: 0; top: 0; }
.land { fill: #dfdfdf; }
.water { fill: #fff; }
.bd { fill: none; stroke: #f4f4f4; stroke-width: .9px; }
.us { fill: #2f5597; }
.uk { fill: #5a75b0; }
.es { fill: #7f96c5; }
.fr { fill: #99add1; }
.be { fill: #dbe5f5; }
.pale { fill: #c9d5ea; }
.ct { font-size: 16px; fill: #595959; font-family: "Open Sans", sans-serif; }
.lg { font-size: 10.500px; fill: #595959; font-family: "Open Sans", sans-serif; }
.dl { font-size: 10.500px; fill: #fff; font-family: "Open Sans", sans-serif; }
.hd { fill: #fff; stroke: #8f8f8f; stroke-width: 1.500; }

/* scrollbar */
.vscroll { width: 21px; flex: none; box-sizing: border-box; padding: 2px 3px 0 3px; display: flex; flex-direction: column; position: relative; }
.vscroll::before { content: ""; position: absolute; left: 3px; width: 15px; top: 697px; bottom: 0; background: #dadada; }
.sb-btn { height: 15px; flex: none; background: #fff; border: 1px solid #c6c6c6; box-sizing: border-box; display: flex; justify-content: center; align-items: center; position: relative; }
.sb-btn.end { position: absolute; left: 3px; width: 15px; top: 769px; height: 12px; }
.cu.dk2 { border-bottom-color: #666; }
.bar2 { width: 7px; height: 2px; background: #666; margin-top: -6px; }
.thumb { display: block; height: 678px; margin-top: 1px; background: #fff; border: 1px solid #a8a8a8; box-sizing: border-box; position: relative; }

/* pane */
.pane { flex: 1; box-sizing: border-box; border-left: 1px solid #bdbdbd; display: flex; flex-direction: column; margin-left: 0; color: #444; }
.p-head { margin-top: 12px; height: 28px; display: flex; align-items: center; padding-left: 13px; }
.p-title { font-size: 20.200px; font-weight: 300; color: #217346; width: 201px; white-space: nowrap; }
.p-c { border-left-width: 5px; border-right-width: 5px; border-top: 5px solid #777; margin-top: -4px; }
.p-x { margin-left: 32px; margin-top: -4px; }
.p-opts { margin-top: 9px; height: 20px; display: flex; align-items: center; padding-left: 18px; font-size: 11.700px; color: #333; }
.p-opts svg { margin-left: 6px; }
.p-opts b { margin-left: 16px; font-weight: 700; font-size: 11.200px; }
.p-icons { margin-top: 11px; height: 24px; display: flex; align-items: center; padding-left: 18px; gap: 20px; }
.p-line { margin: 7px 0 0 12px; }
.p-sec { height: 16px; display: flex; align-items: center; padding-left: 21px; font-weight: 700; color: #217346; font-size: 11.500px; position: relative; }
.s1 { margin-top: 7px; }
.s2 { margin-top: 18px; }
.tri { width: 0; height: 0; border-left: 6px solid transparent; border-bottom: 6px solid #444; margin-right: 8px; margin-top: -2px; }
.p-radios { margin-top: 9px; display: flex; flex-direction: column; }
.p-r { height: 22px; display: flex; align-items: center; padding-left: 35px; gap: 6px; font-size: 11.600px; color: #444; }
.radio { width: 12px; height: 12px; box-sizing: border-box; border: 1px solid #a3a3a3; border-radius: 50%; background: #fff; display: flex; align-items: center; justify-content: center; }
.radio.on::after { content: ""; width: 6px; height: 6px; border-radius: 50%; background: #555; }
.p-div { height: 1px; margin: 5px 33px 0 35px; background: #dcdcdc; }
.p-row { display: flex; align-items: center; padding-left: 45px; font-size: 11.600px; }
.color { margin-top: 7px; height: 26px; }
.colbtn { margin-left: auto; margin-right: 33px; width: 44px; height: 26px; box-sizing: border-box; border: 1px solid #a8a8a8; background: #fff; display: flex; align-items: center; justify-content: center; gap: 6px; }
.transp { margin-top: 7px; height: 20px; }
.tl { width: 80px; }
.spin { margin-left: 6px; width: 73px; height: 20px; box-sizing: border-box; border: 1px solid #a8a8a8; background: #fff; display: flex; align-items: center; justify-content: space-between; padding: 0 4px 0 6px; font-size: 11.500px; }
.spb { display: flex; flex-direction: column; gap: 4px; }
</style>
